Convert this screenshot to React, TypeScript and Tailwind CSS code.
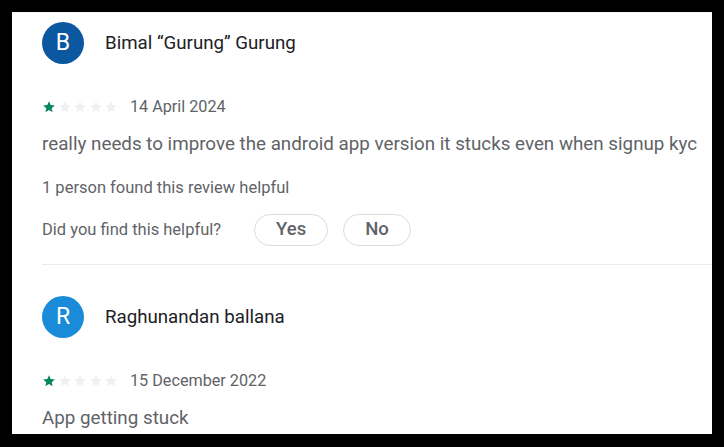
import React from "react";

type Review = {
  initial: string;
  avatar: string;
  name: string;
  date: string;
  rating: number;
  text: string;
  helpful?: string;
};

const REVIEWS: Review[] = [
  {
    initial: "B",
    avatar: "bg-[#0b57a0]",
    name: "Bimal \u201cGurung\u201d Gurung",
    date: "14 April 2024",
    rating: 1,
    text: "really needs to improve the android app version it stucks even when signup kyc",
    helpful: "1 person found this review helpful",
  },
  {
    initial: "R",
    avatar: "bg-[#1a8bd9]",
    name: "Raghunandan ballana",
    date: "15 December 2022",
    rating: 1,
    text: "App getting stuck",
  },
];

function Star({ filled }: { filled: boolean }) {
  return (
    <svg viewBox="0 0 24 24" className="w-[14px] h-[14px]">
      <path
        d="M12 17.27 18.18 21l-1.64-7.03L22 9.24l-7.19-.61L12 2 9.19 8.63 2 9.24l5.46 4.73L5.82 21z"
        fill={filled ? "#01875f" : "#eef0f2"}
      />
    </svg>
  );
}

function ReviewCard({ review, last }: { review: Review; last: boolean }) {
  return (
    <div className={last ? "pt-[31px]" : "pt-[9px] pb-[18px] border-b border-[#e8eaed]"}>
      <div className="flex items-center h-[42px]">
        <div
          className={`w-[42px] h-[42px] rounded-full ${review.avatar} text-white flex items-center justify-center text-[23px]`}
        >
          {review.initial}
        </div>
        <div className="ml-[21px] text-[18.7px] text-[#202124]">{review.name}</div>
      </div>

      {/* rating + date */}
      <div className="flex items-center h-[20px] mt-[33px]">
        <div className="flex gap-[1.5px]">
          {[0, 1, 2, 3, 4].map((i) => (
            <Star key={i} filled={i < review.rating} />
          ))}
        </div>
        <span className="ml-[12px] text-[16.2px] text-[#5f6368]">{review.date}</span>
      </div>

      <p className="mt-[14px] text-[18.8px] leading-[26px] text-[#5f6368]">{review.text}</p>

      {review.helpful && (
        <>
          <p className="mt-[21px] text-[16.5px] leading-[20px] text-[#5f6368]">{review.helpful}</p>
          <div className="mt-[16px] flex items-center">
            <span className="text-[16.5px] text-[#5f6368]">Did you find this helpful?</span>
            <div className="ml-[33px] flex gap-[15px]">
              <button className="h-[32px] px-[21px] rounded-full border border-[#dadce0] text-[18.5px] font-medium text-[#5f6368]">
                Yes
              </button>
              <button className="h-[32px] px-[21px] rounded-full border border-[#dadce0] text-[18.5px] font-medium text-[#5f6368]">
                No
              </button>
            </div>
          </div>
        </>
      )}
    </div>
  );
}

export default function App() {
  return (
    <div className="w-[724px] h-[447px] bg-black pt-[12px] pl-[12px] font-['Roboto',sans-serif]">
      <div className="w-[700px] h-[422px] bg-white overflow-hidden pl-[30px] border-t border-[#f1f3f4]">
        {REVIEWS.map((r, i) => (
          <ReviewCard key={r.name} review={r} last={i === REVIEWS.length - 1} />
        ))}
      </div>
    </div>
  );
}
